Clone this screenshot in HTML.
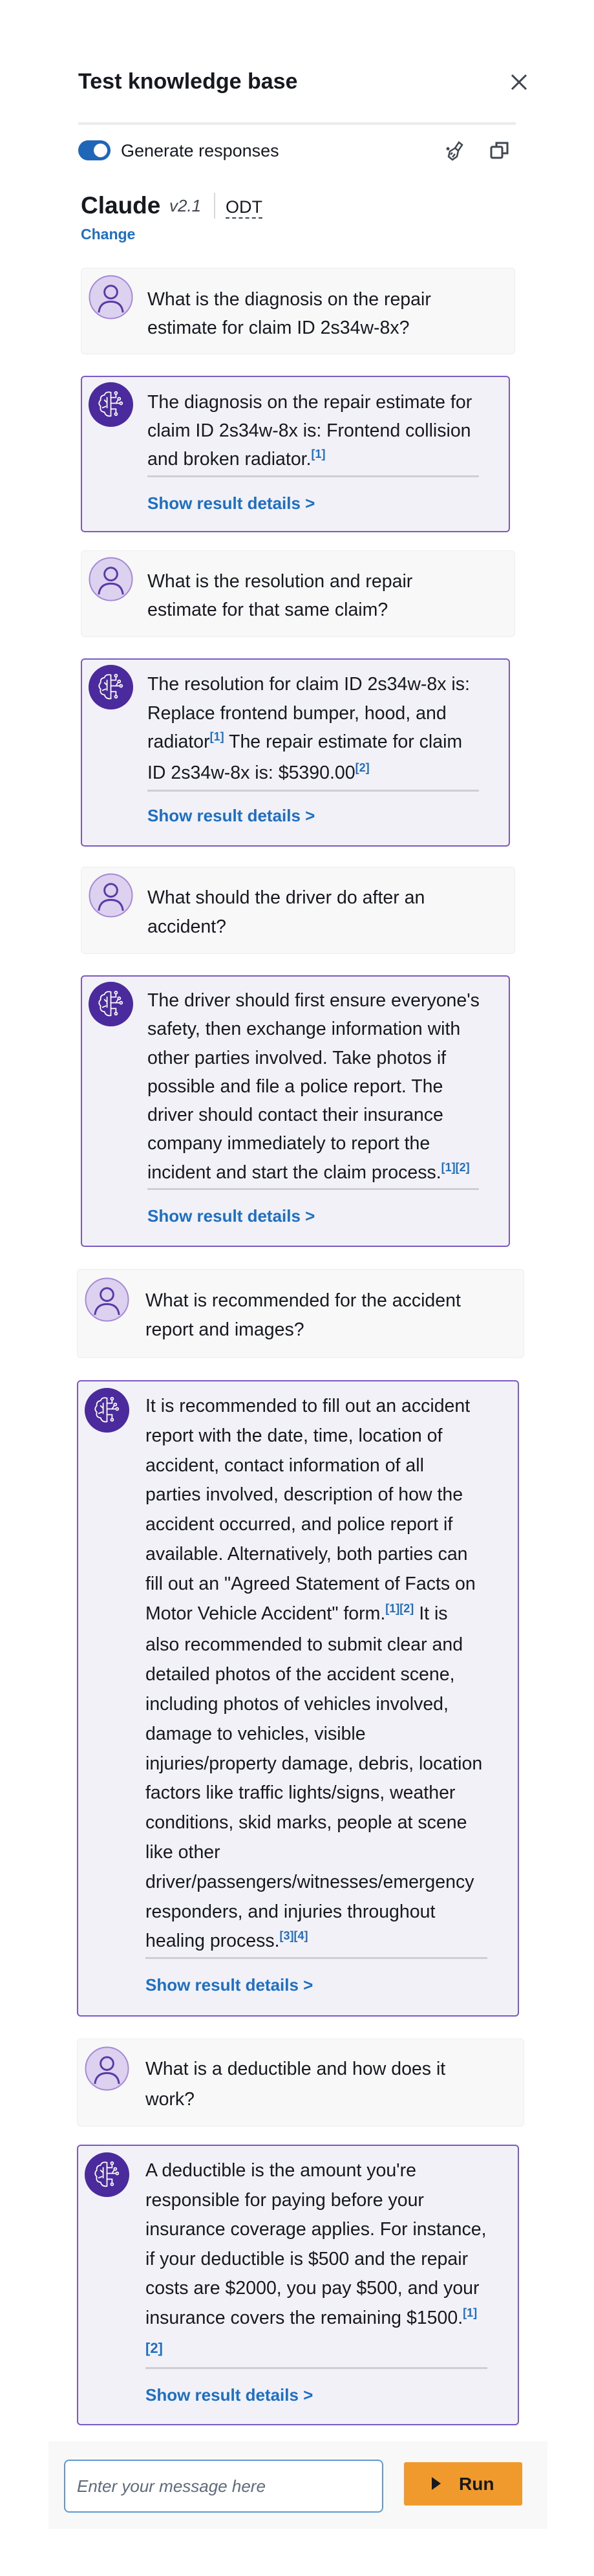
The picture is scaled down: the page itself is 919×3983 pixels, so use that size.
<!DOCTYPE html>
<html><head><meta charset="utf-8"><style>
*{margin:0;padding:0;box-sizing:border-box}
body{width:919px;height:3983px;background:#fff;font-family:"Liberation Sans",sans-serif;color:#16191f;position:relative;overflow:hidden}
.a{position:absolute}
.u{position:absolute;background:#f8f8f8;border:1px solid #eeeeee;border-radius:6px}
.ai{position:absolute;background:#f2f1f8;border:2px solid #7a5ac4;border-radius:6px}
.t{position:absolute;font-size:28.5px;white-space:nowrap}
.s{color:#1d6fc4;font-size:18px;font-weight:bold;position:relative;top:-11px}
.hr{position:absolute;height:3px;background:#cfcfd3}
.lk{position:absolute;color:#1d6fc4;font-weight:bold;font-size:26px;line-height:30px;white-space:nowrap}
.av{position:absolute;width:69px;height:69px}
</style></head><body>
<svg width="0" height="0" style="position:absolute"><defs>
<symbol id="user" viewBox="0 0 70 70"><circle cx="35" cy="35" r="33.5" fill="#dcd2ef" stroke="#a489d6" stroke-width="2"/><circle cx="35" cy="27" r="10" fill="none" stroke="#5a3aa6" stroke-width="3"/><path d="M16 59 Q18 42 35 42 Q52 42 54 59" fill="none" stroke="#5a3aa6" stroke-width="3"/></symbol>
<symbol id="brain" viewBox="0 0 70 70"><circle cx="35" cy="35" r="35" fill="#4a2a9c"/><g fill="none" stroke="#fff" stroke-width="1.8" stroke-linecap="round"><path d="M35 16 Q27 14 25 20 Q18 21 19 28 Q14 33 19 38 Q17 46 25 47 Q27 54 35 53 Z"/><path d="M25 28 L29 32 M29 24 L29 40 M22 40 L27 38"/><path d="M35 24 H43 V19 M35 33 H48 M35 42 H43 V47 M43 33 L46 28"/><circle cx="43" cy="17" r="2"/><circle cx="51" cy="33" r="2"/><circle cx="43" cy="50" r="2"/><circle cx="48" cy="26" r="2"/></g></symbol>
</defs></svg>

<div class="a" style="left:121px;top:108px;font-size:34px;font-weight:bold;line-height:36px">Test knowledge base</div>
<svg class="a" style="left:789px;top:113px" width="28" height="28" viewBox="0 0 28 28"><path d="M3 3L25 25M25 3L3 25" stroke="#414750" stroke-width="3"/></svg>
<div class="a" style="left:121px;top:189px;width:677px;height:4px;background:#e9ebed"></div>

<div class="a" style="left:121px;top:217px;width:50px;height:31px;border-radius:16px;background:#1f66b8"></div>
<div class="a" style="left:145px;top:222px;width:21px;height:21px;border-radius:50%;background:#fff"></div>
<div class="a" style="left:187px;top:218px;font-size:27px;line-height:30px">Generate responses</div>
<svg class="a" style="left:688px;top:216px" width="32" height="34" viewBox="0 0 32 34" fill="none" stroke="#414750" stroke-width="2.5"><path d="M22 4 L27 8 L21 17 L16 13 Z"/><path d="M16 13 L8 18 L6 26 L12 31 L19 26 L21 17"/><path d="M9 23 L12 20 M12 27 L16 22"/><circle cx="5" cy="14" r="1.2" fill="#414750"/></svg>
<svg class="a" style="left:757px;top:216px" width="32" height="32" viewBox="0 0 32 32" fill="none" stroke="#414750" stroke-width="3"><rect x="3" y="11" width="17" height="17" rx="2"/><path d="M11 11V5H28V21H20"/></svg>

<div class="a" style="left:125px;top:298px;font-size:37px;font-weight:bold;line-height:40px">Claude</div>
<div class="a" style="left:262px;top:303px;font-size:26px;font-style:italic;color:#414750;line-height:30px">v2.1</div>
<div class="a" style="left:331px;top:298px;width:2px;height:40px;background:#d5d8dc"></div>
<div class="a" style="left:349px;top:305px;font-size:27px;line-height:30px;border-bottom:2px dashed #414750;padding-bottom:1px">ODT</div>
<div class="a" style="left:125px;top:349px;font-size:23px;font-weight:bold;color:#1d6fc4;line-height:26px">Change</div>

<!-- 1 -->
<div class="u" style="left:125px;top:414px;width:672px;height:134px"></div>
<svg class="av" style="left:137px;top:425px"><use href="#user"/></svg>
<div class="t" style="left:228px;top:441px;line-height:44px">What is the diagnosis on the repair<br>estimate for claim ID 2s34w-8x?</div>

<div class="ai" style="left:125px;top:581px;width:664px;height:242px"></div>
<svg class="av" style="left:137px;top:591px"><use href="#brain"/></svg>
<div class="t" style="left:228px;top:600px;line-height:44px">The diagnosis on the repair estimate for<br>claim ID 2s34w-8x is: Frontend collision<br>and broken radiator.<span class="s">[1]</span></div>
<div class="hr" style="left:228px;top:735px;width:513px"></div>
<div class="lk" style="left:228px;top:763px">Show result details &gt;</div>

<!-- 2 -->
<div class="u" style="left:125px;top:851px;width:672px;height:134px"></div>
<svg class="av" style="left:137px;top:861px"><use href="#user"/></svg>
<div class="t" style="left:228px;top:877px;line-height:44px">What is the resolution and repair<br>estimate for that same claim?</div>

<div class="ai" style="left:125px;top:1018px;width:664px;height:291px"></div>
<svg class="av" style="left:137px;top:1028px"><use href="#brain"/></svg>
<div class="t" style="left:228px;top:1036px;line-height:44.7px">The resolution for claim ID 2s34w-8x is:<br>Replace frontend bumper, hood, and<br>radiator<span class="s">[1]</span> The repair estimate for claim<br>ID 2s34w-8x is: $5390.00<span class="s">[2]</span></div>
<div class="hr" style="left:228px;top:1221px;width:513px"></div>
<div class="lk" style="left:228px;top:1246px">Show result details &gt;</div>

<!-- 3 -->
<div class="u" style="left:125px;top:1340px;width:672px;height:135px"></div>
<svg class="av" style="left:137px;top:1350px"><use href="#user"/></svg>
<div class="t" style="left:228px;top:1366px;line-height:45px">What should the driver do after an<br>accident?</div>

<div class="ai" style="left:125px;top:1508px;width:664px;height:420px"></div>
<svg class="av" style="left:137px;top:1518px"><use href="#brain"/></svg>
<div class="t" style="left:228px;top:1525px;line-height:44.3px">The driver should first ensure everyone's<br>safety, then exchange information with<br>other parties involved. Take photos if<br>possible and file a police report. The<br>driver should contact their insurance<br>company immediately to report the<br>incident and start the claim process.<span class="s">[1][2]</span></div>
<div class="hr" style="left:228px;top:1837px;width:513px"></div>
<div class="lk" style="left:228px;top:1865px">Show result details &gt;</div>

<!-- 4 -->
<div class="u" style="left:119px;top:1962px;width:692px;height:138px"></div>
<svg class="av" style="left:131px;top:1975px"><use href="#user"/></svg>
<div class="t" style="left:225px;top:1989px;line-height:45px">What is recommended for the accident<br>report and images?</div>

<div class="ai" style="left:119px;top:2134px;width:684px;height:984px"></div>
<svg class="av" style="left:131px;top:2146px"><use href="#brain"/></svg>
<div class="t" style="left:225px;top:2152px;line-height:45.8px">It is recommended to fill out an accident<br>report with the date, time, location of<br>accident, contact information of all<br>parties involved, description of how the<br>accident occurred, and police report if<br>available. Alternatively, both parties can<br>fill out an "Agreed Statement of Facts on<br>Motor Vehicle Accident" form.<span class="s">[1][2]</span> It is<br>also recommended to submit clear and<br>detailed photos of the accident scene,<br>including photos of vehicles involved,<br>damage to vehicles, visible<br>injuries/property damage, debris, location<br>factors like traffic lights/signs, weather<br>conditions, skid marks, people at scene<br>like other<br>driver/passengers/witnesses/emergency<br>responders, and injuries throughout<br>healing process.<span class="s">[3][4]</span></div>
<div class="hr" style="left:225px;top:3026px;width:529px"></div>
<div class="lk" style="left:225px;top:3054px">Show result details &gt;</div>

<!-- 5 -->
<div class="u" style="left:119px;top:3152px;width:692px;height:136px"></div>
<svg class="av" style="left:131px;top:3164px"><use href="#user"/></svg>
<div class="t" style="left:225px;top:3176px;line-height:47px">What is a deductible and how does it<br>work?</div>

<div class="ai" style="left:119px;top:3316px;width:684px;height:434px"></div>
<svg class="av" style="left:131px;top:3328px"><use href="#brain"/></svg>
<div class="t" style="left:225px;top:3334px;line-height:45.6px">A deductible is the amount you're<br>responsible for paying before your<br>insurance coverage applies. For instance,<br>if your deductible is $500 and the repair<br>costs are $2000, you pay $500, and your<br>insurance covers the remaining $1500.<span class="s">[1]</span><br><span class="s" style="top:-4px;font-size:22px">[2]</span></div>
<div class="hr" style="left:225px;top:3660px;width:529px"></div>
<div class="lk" style="left:225px;top:3688px">Show result details &gt;</div>

<!-- input -->
<div class="a" style="left:75px;top:3775px;width:772px;height:135px;background:#f8f8f8"></div>
<div class="a" style="left:99px;top:3803px;width:494px;height:82px;background:#fff;border:2px solid #5b9bd5;border-radius:8px"></div>
<div class="a" style="left:119px;top:3829px;font-size:26px;font-style:italic;color:#5f6b7a;line-height:30px">Enter your message here</div>
<div class="a" style="left:625px;top:3807px;width:183px;height:67px;background:#f0992d;border-radius:3px"></div>
<svg class="a" style="left:666px;top:3828px" width="18" height="24" viewBox="0 0 18 24"><path d="M2 2L16 12L2 22Z" fill="#16191f"/></svg>
<div class="a" style="left:710px;top:3825px;font-size:28px;font-weight:bold;line-height:32px">Run</div>
</body></html>
